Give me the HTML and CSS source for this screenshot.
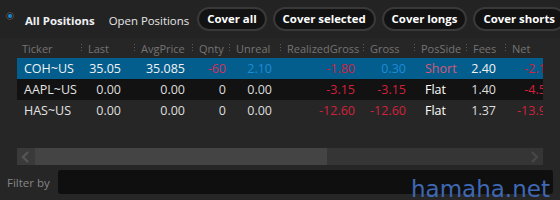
FILE: index.html
```html
<!DOCTYPE html>
<html>
<head>
<meta charset="utf-8">
<link rel="stylesheet" href="styles.css">
</head>
<body>
<div class="app">
  <div class="topbar">
    <span class="radio"><span class="dot"></span></span>
    <span class="tab active">All Positions</span>
    <span class="tab">Open Positions</span>
    <button class="btn">Cover all</button>
    <button class="btn">Cover selected</button>
    <button class="btn">Cover longs</button>
    <button class="btn">Cover shorts</button>
  </div>
  <div class="table">
    <div class="row head">
      <div class="hc first">Ticker</div>
      <div class="hc"><span class="sep"></span>Last</div>
      <div class="hc"><span class="sep"></span>AvgPrice</div>
      <div class="hc"><span class="sep"></span>Qnty</div>
      <div class="hc"><span class="sep"></span>Unreal</div>
      <div class="hc"><span class="sep"></span>RealizedGross</div>
      <div class="hc"><span class="sep"></span>Gross</div>
      <div class="hc"><span class="sep"></span>PosSide</div>
      <div class="hc"><span class="sep"></span>Fees</div>
      <div class="hc"><span class="sep"></span>Net</div>
    </div>
    <div class="row sel">
      <div class="c ticker">COH~US</div>
      <div class="c last">35.05</div>
      <div class="c avg">35.085</div>
      <div class="c qty neg-sel">-60</div>
      <div class="c unreal pos">2.10</div>
      <div class="c rg neg">-1.80</div>
      <div class="c gross pos">0.30</div>
      <div class="c side short">Short</div>
      <div class="c fees white">2.40</div>
      <div class="c net neg">-2.10</div>
    </div>
    <div class="row alt">
      <div class="c ticker">AAPL~US</div>
      <div class="c last">0.00</div>
      <div class="c avg">0.00</div>
      <div class="c qty">0</div>
      <div class="c unreal">0.00</div>
      <div class="c rg neg">-3.15</div>
      <div class="c gross neg">-3.15</div>
      <div class="c side flat">Flat</div>
      <div class="c fees">1.40</div>
      <div class="c net neg">-4.55</div>
    </div>
    <div class="row">
      <div class="c ticker">HAS~US</div>
      <div class="c last">0.00</div>
      <div class="c avg">0.00</div>
      <div class="c qty">0</div>
      <div class="c unreal">0.00</div>
      <div class="c rg neg">-12.60</div>
      <div class="c gross neg">-12.60</div>
      <div class="c side flat">Flat</div>
      <div class="c fees">1.37</div>
      <div class="c net neg">-13.97</div>
    </div>
  </div>
  <div class="hscroll">
    <span class="sb-btn"><svg width="10" height="12" viewBox="0 0 10 12"><polyline points="7,1 2,6 7,11" fill="none" stroke="#555" stroke-width="2.4"/></svg></span>
    <span class="sb-thumb"></span>
    <span class="sb-track"></span>
    <span class="sb-btn right"><svg width="10" height="12" viewBox="0 0 10 12"><polyline points="3,1 8,6 3,11" fill="none" stroke="#474747" stroke-width="2.4"/></svg></span>
  </div>
  <div class="filter">
    <span class="flabel">Filter by</span>
    <span class="finput"></span>
  </div>
  <div class="watermark">hamaha.net</div>
</div>
</body>
</html>
```
FILE: styles.css
```css
html, body {
  margin: 0;
  padding: 0;
  background: #262626;
}
.app {
  position: relative;
  width: 560px;
  height: 200px;
  overflow: hidden;
  background: #262626;
  font-family: "Open Sans", "Noto Sans", sans-serif;
  color: #e0e0e0;
}
.topbar {
  height: 38px;
  display: flex;
  align-items: center;
  padding-left: 6px;
  background: #232323;
  white-space: nowrap;
  overflow: hidden;
}
.radio {
  width: 6px;
  height: 6px;
  border: 1px solid #4a4a4a;
  border-radius: 50%;
  display: flex;
  align-items: center;
  justify-content: center;
  margin-bottom: 6px;
  margin-right: 11px;
  flex: none;
}
.dot {
  width: 4px;
  height: 4px;
  border-radius: 50%;
  background: #1a8ad4;
}
.tab {
  flex: none;
  font-size: 11.4px;
  color: #e6e6e6;
  margin-right: 13px;
  margin-top: 2px;
}
.tab.active {
  font-weight: 700;
  color: #eef0f4;
  margin-right: 14px;
}
.tab + .tab {
  margin-right: 8px;
}
.btn {
  flex: none;
  height: 24px;
  margin-right: 6px;
  padding: 0 8px;
  border: 2px solid #393939;
  border-radius: 12px;
  background: #121212;
  color: #ffffff;
  font-family: "Open Sans", "Noto Sans", sans-serif;
  font-weight: 700;
  font-size: 11.4px;
  line-height: 20px;
}
.table {
  margin-left: 17px;
  width: 526px;
  height: 110px;
  overflow: hidden;
}
.row {
  display: grid;
  grid-template-columns: 64px 53px 58px 37px 51px 83px 51px 52px 39px 60px;
  height: 21px;
  align-items: center;
  font-size: 12.5px;
  white-space: nowrap;
}
.row.head {
  height: 20px;
  font-size: 11px;
  color: #747474;
}
.hc {
  display: flex;
  align-items: center;
  gap: 6px;
}
.hc.first {
  padding-left: 5px;
}
.sep {
  width: 1px;
  height: 9px;
  flex: none;
  background: repeating-linear-gradient(to bottom, #5a5a5a 0 1px, transparent 1px 3px);
}
.row.sel { background: #035e8d; }
.row.alt { background: #121212; }
.c {
  text-align: right;
  color: #dedede;
}
.ticker { text-align: left; padding-left: 7px; color: #e4e4e4; }
.last { padding-right: 13px; }
.avg { padding-right: 7px; }
.qty { padding-right: 3px; }
.unreal { padding-right: 8px; }
.rg { padding-right: 8px; }
.gross { padding-right: 8px; }
.side { text-align: left; padding-left: 11px; }
.fees { padding-right: 9px; }
.net { padding-right: 12px; }
.sel .c { color: #f2f2f2; }
.neg, .sel .neg { color: #d4203c; }
.sel .neg-sel { color: #d4305a; }
.pos, .sel .pos { color: #1d8bd6; }
.sel .short { color: #d45a7a; }
.flat { color: #ffffff; }
.white { color: #ffffff; }
.hscroll {
  margin-left: 17px;
  width: 526px;
  height: 17px;
  display: flex;
  background: #353535;
}
.sb-btn {
  width: 18px;
  flex: none;
  display: flex;
  align-items: center;
  justify-content: center;
  background: #3a3a3a;
}
.sb-btn.right { background: #353535; }
.sb-thumb {
  width: 292px;
  flex: none;
  background: #444444;
}
.sb-track {
  flex: 1;
}
.filter {
  margin-top: 5px;
  display: flex;
  align-items: center;
  height: 24px;
  padding-left: 7px;
  padding-right: 7px;
}
.flabel {
  font-size: 11.5px;
  color: #858585;
  margin-right: 8px;
}
.finput {
  flex: 1;
  height: 24px;
  background: #0f0f0f;
  border-radius: 3px;
}
.watermark {
  position: absolute;
  left: 411px;
  top: 178px;
  font-family: "DejaVu Sans", sans-serif;
  font-size: 23px;
  line-height: 23px;
  color: #3f68b4;
}
```
